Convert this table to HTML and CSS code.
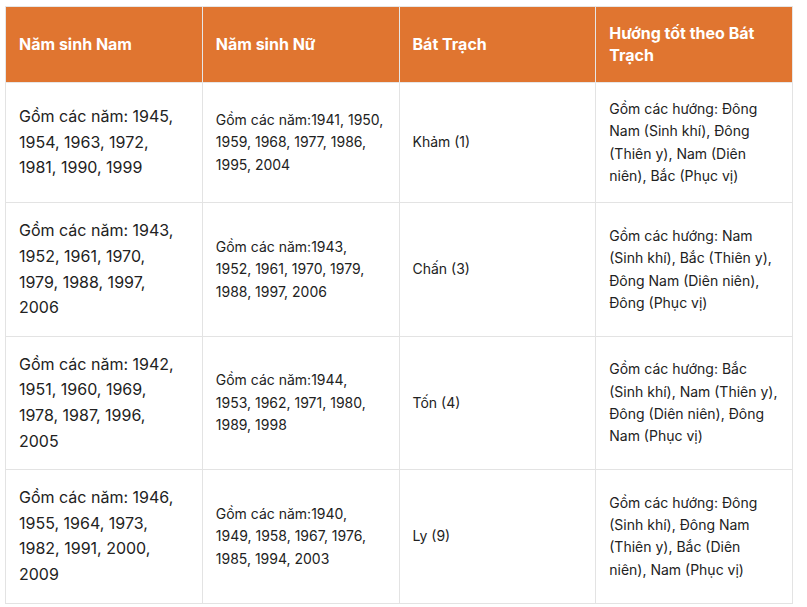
FILE: index.html
```html
<!DOCTYPE html>
<html lang="vi">
<head>
<meta charset="utf-8">
<link rel="stylesheet" href="styles.css">
</head>
<body>
<div class="wrap">
<table class="tbl">
<thead>
<tr>
<th>Năm sinh Nam</th>
<th>Năm sinh Nữ</th>
<th>Bát Trạch</th>
<th>Hướng tốt theo Bát Trạch</th>
</tr>
</thead>
<tbody>
<tr>
<td class="big">Gồm các năm: 1945, 1954, 1963, 1972, 1981, 1990, 1999</td>
<td>Gồm các năm:1941, 1950, 1959, 1968, 1977, 1986, 1995, 2004</td>
<td>Khảm (1)</td>
<td>Gồm các hướng: Đông Nam (Sinh khí), Đông (Thiên y), Nam (Diên niên), Bắc (Phục vị)</td>
</tr>
<tr>
<td class="big">Gồm các năm: 1943, 1952, 1961, 1970, 1979, 1988, 1997, 2006</td>
<td>Gồm các năm:1943, 1952, 1961, 1970, 1979, 1988, 1997, 2006</td>
<td>Chấn (3)</td>
<td>Gồm các hướng: Nam (Sinh khí), Bắc (Thiên y), Đông Nam (Diên niên), Đông (Phục vị)</td>
</tr>
<tr>
<td class="big">Gồm các năm: 1942, 1951, 1960, 1969, 1978, 1987, 1996, 2005</td>
<td>Gồm các năm:1944, 1953, 1962, 1971, 1980, 1989, 1998</td>
<td>Tốn (4)</td>
<td>Gồm các hướng: Bắc (Sinh khí), Nam (Thiên y), Đông (Diên niên), Đông Nam (Phục vị)</td>
</tr>
<tr>
<td class="big">Gồm các năm: 1946, 1955, 1964, 1973, 1982, 1991, 2000, 2009</td>
<td>Gồm các năm:1940, 1949, 1958, 1967, 1976, 1985, 1994, 2003</td>
<td>Ly (9)</td>
<td>Gồm các hướng: Đông (Sinh khí), Đông Nam (Thiên y), Bắc (Diên niên), Nam (Phục vị)</td>
</tr>
</tbody>
</table>
</div>
</body>
</html>
```
FILE: styles.css
```css
html, body {
  margin: 0;
  padding: 0;
  background: #fff;
}
.wrap {
  padding: 6px 14px 0 5px;
}
.tbl {
  width: 788px;
  border-collapse: collapse;
  table-layout: fixed;
  font-family: Inter, "Noto Sans", sans-serif;
  color: #222;
}
.tbl th {
  background: #e07530;
  color: #fff;
  font-weight: 700;
  font-size: 16px;
  line-height: 22.4px;
  text-align: left;
  padding: 15px 13px;
  border: 1px solid #e6e6e6;
  vertical-align: middle;
}
.tbl td {
  font-size: 14px;
  line-height: 22.4px;
  padding: 15px 13px;
  border: 1px solid #e3e3e3;
  vertical-align: middle;
}
.tbl td.big {
  font-size: 16px;
  line-height: 25.6px;
}
```
